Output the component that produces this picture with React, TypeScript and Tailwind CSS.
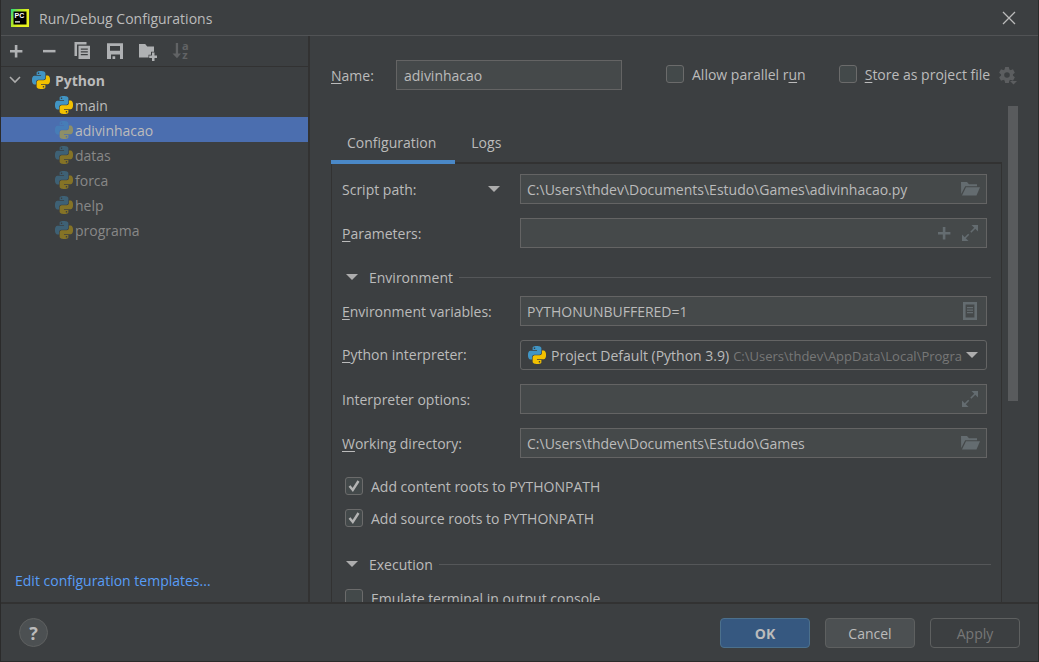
import { useState, type ReactNode } from "react";

const BLUE_SNAKE =
  "M14.25.18l.9.2.73.26.59.3.45.32.34.34.25.34.16.33.1.3.04.26.02.2-.01.13V8.5l-.05.63-.13.55-.21.46-.26.38-.3.31-.33.25-.35.19-.35.14-.33.1-.3.07-.26.04-.21.02-.13.01H8.77l-.69.05-.59.14-.5.22-.41.27-.33.32-.27.35-.2.36-.15.37-.1.35-.07.32-.04.27-.02.21v3.06H3.17l-.21-.03-.28-.07-.32-.12-.35-.18-.36-.26-.36-.36-.35-.46-.32-.59-.28-.73-.21-.88-.14-1.05-.05-1.23.06-1.22.16-1.04.24-.87.32-.71.36-.57.4-.44.42-.33.42-.24.4-.16.36-.1.32-.05.24-.01h.16l.06.01h8.16v-.83H6.18l-.01-2.75-.02-.37.05-.34.11-.31.17-.28.25-.26.31-.23.38-.2.44-.18.51-.15.58-.12.64-.1.71-.06.77-.04.84-.02 1.27.05zm-6.3 1.98l-.23.33-.08.41.08.41.23.34.33.22.41.09.41-.09.33-.22.23-.34.08-.41-.08-.41-.23-.33-.33-.22-.41-.09-.41.09z";

function PythonIcon({ className = "" }: { className?: string }) {
  return (
    <svg viewBox="0 0 24 24" className={`size-[18px] shrink-0 ${className}`} aria-hidden="true">
      <path d={BLUE_SNAKE} fill="#4195c4" />
      <path d={BLUE_SNAKE} fill="#f2c100" transform="rotate(180 12 12)" />
    </svg>
  );
}

function AppIcon() {
  return (
    <svg viewBox="0 0 18 18" className="size-[18px] shrink-0" aria-hidden="true">
      <defs>
        <linearGradient id="edge" x1="0" y1="0" x2="1" y2="0.6">
          <stop offset="0" stopColor="#21d789" />
          <stop offset="0.35" stopColor="#9be52c" />
          <stop offset="0.7" stopColor="#e6f01e" />
        </linearGradient>
      </defs>
      <rect width="18" height="18" fill="url(#edge)" />
      <rect x="2.5" y="2.500" width="13" height="13" fill="#000" />
      <text x="3.6" y="9" fontFamily="Liberation Sans, sans-serif" fontWeight="700" fontSize="7" fill="#fff">PC</text>
      <rect x="4" y="12.300" width="5" height="1.2" fill="#fff" />
    </svg>
  );
}

function Icon({ children, className = "size-5" }: { children: ReactNode; className?: string }) {
  return (
    <svg viewBox="0 0 20 20" className={`shrink-0 overflow-visible ${className}`} fill="currentColor" aria-hidden="true">
      {children}
    </svg>
  );
}

const plus = <path d="M8.8 4h2.6v4.9h5v2.5h-5v5H8.8v-5H4V8.900h4.800z" />;
const minus = <path d="M4 8.900h12.500v2.500H4z" />;
const copy = (
  <>
    <path d="M2.500 1H14.500v2.400H5V15H2.500z" />
    <path fillRule="evenodd" d="M6.500 4.800H18V18H6.500zM8.800 7.600v1.200h7V7.600zM8.800 10.300v1.200h7v-1.200zM8.800 13v1.200h7V13z" />
  </>
);
const save = <path fillRule="evenodd" d="M2 2.300h16V18h-3v-4.500H6V18H2zM5 5v4.800h10V5zM7.500 15.300h2.700V18H7.500z" />;
const newFolder = (
  <>
    <path d="M1 3h6.200l2 2.600H16v5.200h-3v3H10.500v2.600H1z" />
    <path d="M14 11.500h2.500v3H19V17h-2.500v3H14v-3h-2.800v-2.500H14z" />
  </>
);
const sortAz = (
  <>
    <path d="M4.800 2h2.300v10.500H10L6 17.200l-4.500-4.700h3.300z" />
    <text x="11" y="8.500" fontFamily="Open Sans, sans-serif" fontWeight="700" fontSize="11">a</text>
    <text x="11.300" y="17.500" fontFamily="Open Sans, sans-serif" fontWeight="700" fontSize="11">z</text>
  </>
);
const folder = (
  <>
    <path d="M1 3h6l2 2.200h8v2H5.200L1.200 15z" />
    <path d="M6 8.200h14l-3.500 8.300H2z" />
  </>
);
const expand = (
  <>
    <path d="M11.500 2H18v6.500z" />
    <path d="M8.500 18H2v-6.500z" />
    <path d="M15.500 4.500L10.800 9.200M4.500 15.500l4.200-4.200" stroke="currentColor" strokeWidth="1.600" />
  </>
);
const list = (
  <path fillRule="evenodd" d="M3 1h14v18H3zM5.600 3.500v13h8.800v-13zM7 6h6v1.300H7zM7 8.500h6v1.300H7zM7 11h6v1.300H7z" />
);

const toolbar = [
  { label: "Add New Configuration", icon: plus },
  { label: "Remove Configuration", icon: minus },
  { label: "Copy Configuration", icon: copy },
  { label: "Save Configuration", icon: save },
  { label: "Create New Folder", icon: newFolder },
  { label: "Sort Configurations", icon: sortAz, disabled: true },
];

const configurations = [
  { name: "main", saved: true },
  { name: "adivinhacao" },
  { name: "datas" },
  { name: "forca" },
  { name: "help" },
  { name: "programa" },
];

function Mnemonic({ text, at = 0 }: { text: string; at?: number }) {
  return (
    <>
      {text.slice(0, at)}
      <span className="underline underline-offset-2">{text[at]}</span>
      {text.slice(at + 1)}
    </>
  );
}

function Caret() {
  return (
    <svg viewBox="0 0 12 6" className="h-[6px] w-3 shrink-0 fill-[#adadad]" aria-hidden="true">
      <path d="M0 0h12L6 6z" />
    </svg>
  );
}

function Check({ children, checked = false }: { children: ReactNode; checked?: boolean }) {
  return (
    <label className="flex items-center gap-2 whitespace-nowrap">
      <span className="grid shrink-0">
        <input
          type="checkbox"
          defaultChecked={checked}
          className="peer col-start-1 row-start-1 size-[18px] appearance-none rounded-[3px] border border-[#6b6b6b] bg-[#43494a]"
        />
        <svg viewBox="0 0 18 18" className="pointer-events-none invisible col-start-1 row-start-1 size-[18px] peer-checked:visible" aria-hidden="true">
          <path d="M4.500 9l3.300 4L13.500 4" fill="none" stroke="#b4b4b4" strokeWidth="2.400" />
        </svg>
      </span>
      <span className="pt-0.5">{children}</span>
    </label>
  );
}

function Field({ id, label, value = "", actions, extra }: {
  id: string;
  label: ReactNode;
  value?: string;
  actions: { label: string; icon: ReactNode }[];
  extra?: ReactNode;
}) {
  return (
    <div className="mr-1 flex h-[30px] items-center">
      <div className="flex w-[178px] shrink-0 items-center justify-between pr-5">
        <label htmlFor={id} className="pt-0.5">{label}</label>
        {extra}
      </div>
      <div className="flex h-full min-w-0 flex-1 items-center gap-[6px] border border-[#646464] bg-[#45494a] pr-[6px] pl-[6px]">
        <input id={id} defaultValue={value} className="min-w-0 flex-1 bg-transparent pt-0.5 outline-none" />
        {actions.map((a) => (
          <button key={a.label} type="button" aria-label={a.label} className="text-[#646c70]">
            <Icon>{a.icon}</Icon>
          </button>
        ))}
      </div>
    </div>
  );
}

function Section({ title }: { title: string }) {
  return (
    <button type="button" className="flex h-[30px] w-full items-center pl-1">
      <Caret />
      <span className="ml-[11px] pt-0.5">{title}</span>
      <span className="ml-[6px] h-px flex-1 bg-[#555759]" />
    </button>
  );
}

export default function App() {
  const [selected, setSelected] = useState("adivinhacao");
  return (
    <div className="flex h-screen flex-col overflow-hidden border-x border-b border-[#2b2b2b] bg-[#3c3f41] font-['Open_Sans','Noto_Sans',sans-serif] text-[14px] leading-5 text-[#bbbbbb]">
      <header className="flex h-9 shrink-0 items-center border-b border-[#515355] pr-[21px] pl-[10px]">
        <AppIcon />
        <h1 className="ml-[10px] flex-1 pt-0.5">Run/Debug Configurations</h1>
        <button type="button" aria-label="Close" className="p-px">
          <svg viewBox="0 0 14 14" className="size-[14px]" fill="none" stroke="#bbbbbb" strokeWidth="1.300" aria-hidden="true">
            <path d="M1 1l12 12M13 1L1 13" />
          </svg>
        </button>
      </header>

      <div className="flex min-h-0 flex-1">
        <aside className="flex w-[309px] shrink-0 flex-col border-r-2 border-[#323232]">
          <div className="flex h-[31px] shrink-0 items-center border-b border-[#323232]">
            {toolbar.map((t) => (
              <button
                key={t.label}
                type="button"
                aria-label={t.label}
                disabled={t.disabled}
                className="flex w-[33px] pl-[5px] text-[#afb1b3] disabled:text-[#616365]"
              >
                <Icon>{t.icon}</Icon>
              </button>
            ))}
          </div>
          <div className="flex h-[25px] items-center pl-2">
            <svg viewBox="0 0 12 8" className="h-2 w-3" fill="none" stroke="#adadad" strokeWidth="1.600" aria-hidden="true">
              <path d="M1 1l5 5 5-5" />
            </svg>
            <PythonIcon className="ml-[11px]" />
            <span className="ml-[5px] pt-0.5 font-bold">Python</span>
          </div>
          <ul>
            {configurations.map((c) => {
              const active = c.name === selected;
              const tone = active ? "bg-[#4b6eaf] text-[#bbbbbb]" : c.saved ? "" : "text-[#888888]";
              return (
                <li key={c.name}>
                  <button
                    type="button"
                    onClick={() => setSelected(c.name)}
                    className={`flex h-[25px] w-full items-center gap-[2px] pl-[54px] ${tone}`}
                  >
                    <PythonIcon className={c.saved ? "" : "opacity-40"} />
                    <span className="pt-0.5">{c.name}</span>
                  </button>
                </li>
              );
            })}
          </ul>
          <a href="#templates" className="mt-auto mb-[11px] ml-[14px] text-[#589df6]">
            Edit configuration templates...
          </a>
        </aside>

        <main className="flex min-w-0 flex-1 flex-col pt-6 pr-5 pl-[21px]">
          <div className="flex h-[30px] shrink-0 items-center">
            <label htmlFor="name" className="w-[65px] shrink-0 pt-0.5">
              <Mnemonic text="Name:" />
            </label>
            <input
              id="name"
              defaultValue="adivinhacao"
              className="h-[30px] w-[226px] min-w-0 border border-[#646464] bg-[#45494a] px-[7px] outline-none"
            />
            <div className="ml-11 flex items-center gap-[33px] pb-0.5">
              <Check>
                <Mnemonic text="Allow parallel run" at={16} />
              </Check>
              <Check>
                <Mnemonic text="Store as project file" />
              </Check>
            </div>
            <button type="button" aria-label="Storage settings" className="ml-auto text-[#5c5e60]">
              <Icon>
                <g transform="translate(9 10)">
                  <path
                    fillRule="evenodd"
                    d="M0-6a6 6 0 1 1 0 12a6 6 0 1 1 0-12zM0-2.800a2.800 2.800 0 1 0 0 5.600a2.800 2.800 0 1 0 0-5.600z"
                  />
                  {[0, 60, 120, 180, 240, 300].map((a) => (
                    <path key={a} d="M-1.900-8h3.800l.6 3.500h-5z" transform={`rotate(${a})`} />
                  ))}
                </g>
                <path d="M12 16h7l-3.500 3.500z" />
              </Icon>
            </button>
          </div>

          <div className="mt-4 flex min-h-0 flex-1 gap-[6px]">
            <div className="min-w-0 flex-1 overflow-hidden">
              <div role="tablist" className="flex h-[58px] items-end bg-[linear-gradient(#323232,#323232)] bg-[length:100%_2px] bg-bottom bg-no-repeat">
                <button type="button" role="tab" aria-selected="true" className="h-[42px] border-b-4 border-[#4a88c7] pt-1 pr-[19px] pl-4">
                  Configuration
                </button>
                <button type="button" role="tab" aria-selected="false" className="h-[42px] border-b-4 border-transparent pt-1 pr-[19px] pl-4">
                  Logs
                </button>
              </div>
              <div role="tabpanel" className="border-x border-[#323232] pt-[10px] pr-[10px] pb-10 pl-[10px]">
                <div className="flex flex-col gap-[14px]">
                  <Field
                    id="script"
                    label="Script path:"
                    value="C:\Users\thdev\Documents\Estudo\Games\adivinhacao.py"
                    actions={[{ label: "Browse script", icon: folder }]}
                    extra={
                      <button type="button" aria-label="Choose target type">
                        <Caret />
                      </button>
                    }
                  />
                  <Field
                    id="parameters"
                    label={<Mnemonic text="Parameters:" />}
                    actions={[
                      { label: "Insert macro", icon: plus },
                      { label: "Expand parameters", icon: expand },
                    ]}
                  />
                </div>
                <div className="mt-[14px] mb-1">
                  <Section title="Environment" />
                </div>
                <div className="flex flex-col gap-[14px]">
                  <Field
                    id="env"
                    label={<Mnemonic text="Environment variables:" />}
                    value="PYTHONUNBUFFERED=1"
                    actions={[{ label: "Edit environment variables", icon: list }]}
                  />
                  <div className="mr-1 flex h-[30px] items-center">
                    <label htmlFor="interpreter" className="w-[178px] shrink-0">
                      <Mnemonic text="Python interpreter:" />
                    </label>
                    <div className="flex h-full min-w-0 flex-1 items-center rounded-[3px] border border-[#646464] pr-2 pl-[7px]">
                      <PythonIcon />
                      <select
                        id="interpreter"
                        className="ml-[5px] shrink-0 appearance-none bg-transparent pt-0.5 outline-none [field-sizing:content]"
                      >
                        <option>Project Default (Python 3.9)</option>
                      </select>
                      <span className="ml-1 min-w-0 flex-1 overflow-hidden pt-0.5 text-[13px] whitespace-nowrap text-[#777777]">
                        C:\Users\thdev\AppData\Local\Progra
                      </span>
                      <Caret />
                    </div>
                  </div>
                  <Field
                    id="options"
                    label="Interpreter options:"
                    actions={[{ label: "Expand interpreter options", icon: expand }]}
                  />
                  <Field
                    id="directory"
                    label={<Mnemonic text="Working directory:" />}
                    value="C:\Users\thdev\Documents\Estudo\Games"
                    actions={[{ label: "Browse directory", icon: folder }]}
                  />
                </div>
                <div className="mt-[17px] flex flex-col gap-[10px] pl-[3px]">
                  <Check checked>Add content roots to PYTHONPATH</Check>
                  <Check checked>Add source roots to PYTHONPATH</Check>
                </div>
                <div className="mt-5 mb-2">
                  <Section title="Execution" />
                </div>
                <div className="pl-[3px]">
                  <Check>Emulate terminal in output console</Check>
                </div>
              </div>
            </div>
            <div className="w-[10px] shrink-0">
              <div className="h-[295px] bg-[#595b5d]" />
            </div>
          </div>
        </main>
      </div>

      <footer className="flex h-[59px] shrink-0 items-center gap-[15px] border-t-2 border-[#323232] pr-[18px] pl-[18px]">
        <button
          type="button"
          aria-label="Help"
          className="mr-auto size-[29px] rounded-full border border-[#5e6060] bg-[#4c5052] text-[18px] font-bold"
        >
          ?
        </button>
        <button type="button" className="h-[30px] w-[90px] rounded-[4px] border border-[#4c708c] bg-[#365880] pt-0.5 font-bold">
          OK
        </button>
        <button type="button" className="h-[30px] w-[90px] rounded-[4px] border border-[#5e6060] bg-[#4c5052] pt-0.5">
          Cancel
        </button>
        <button type="button" disabled className="h-[30px] w-[90px] rounded-[4px] border border-[#5e6060] pt-0.5 text-[#777777]">
          Apply
        </button>
      </footer>
    </div>
  );
}
